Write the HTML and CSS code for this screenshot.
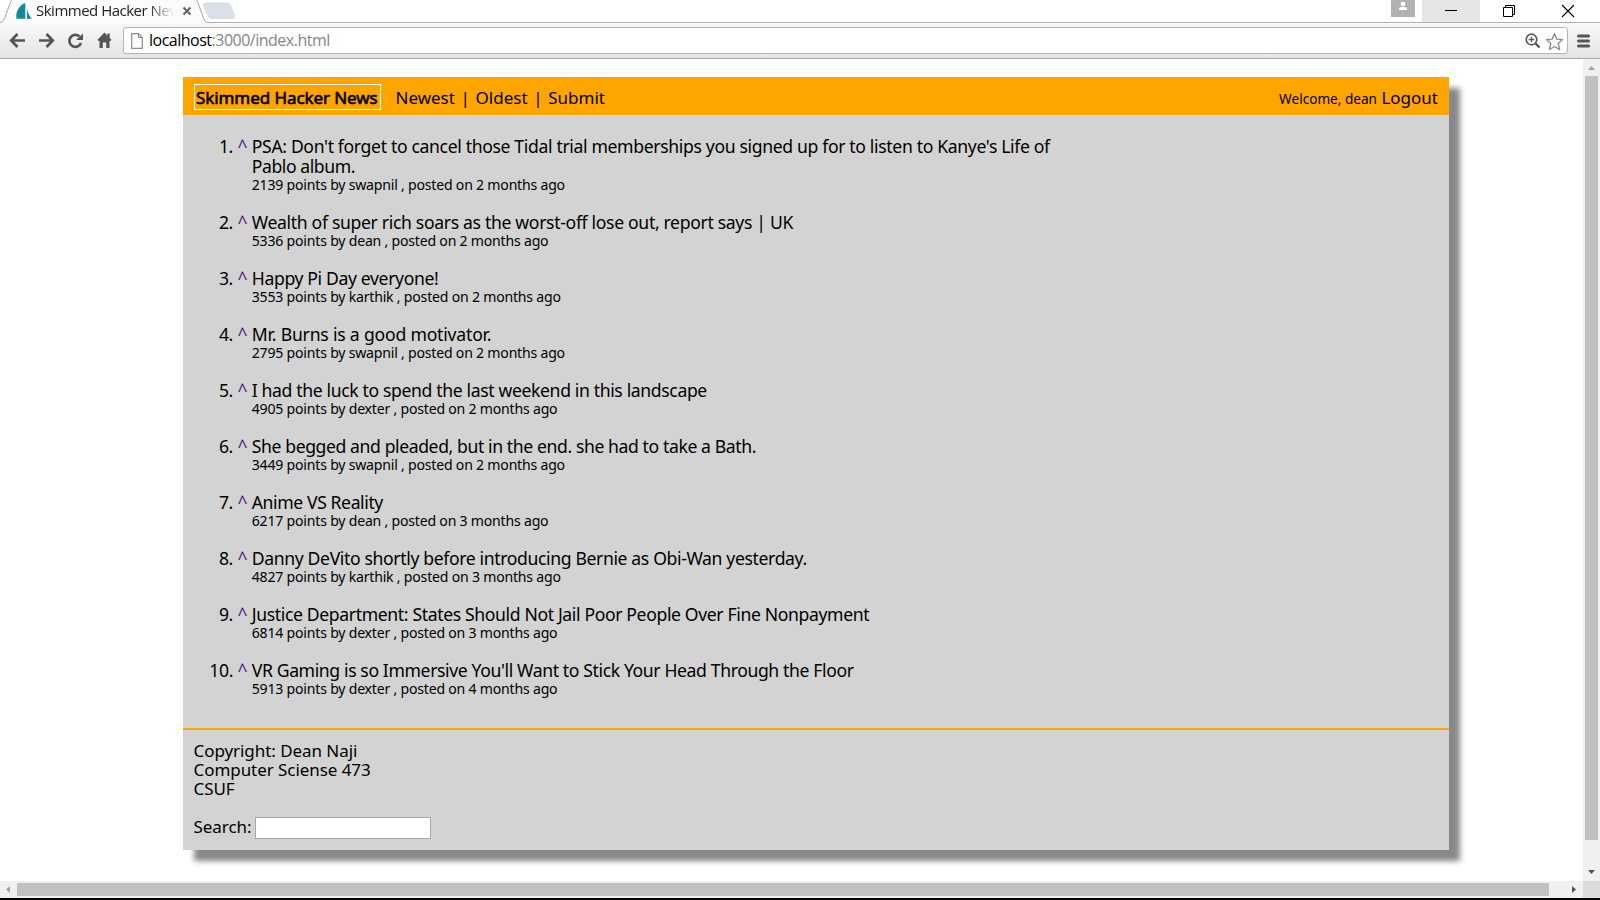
FILE: index.html
```html
<!DOCTYPE html>
<html lang="en">
<head>
<meta charset="utf-8">
<title>Skimmed Hacker News</title>
<link rel="stylesheet" href="styles.css">
</head>
<body>
<div class="tabs">
  <svg class="tab-art" width="250" height="24" viewBox="0 0 250 24">
    <path d="M0 22.5C3 22 4 20 5 17L10.500 2.500C11 1 11.500 0 12.500-1H195C197 0 197 1 198 3L203.500 18C204.500 21 205.500 22.500 208 22.500V24H0Z" fill="#fbfbfb"/>
    <path d="M0 22.500C3 22 4 20 5 17L10.500 2.500C11 1 11.500 0 12.500-1M195-1C197 0 197 1 198 3L203.500 18C204.500 21 205.500 22.500 208 22.500" fill="none" stroke="#a5a5a5"/>
    <path d="M206 3H227Q230 3 231 6L234.500 16Q235 18.500 232.500 18.500H212Q209 18.500 208 16L203.500 5.500Q203 3 206 3Z" fill="#dae0e8" stroke="#ccd2da" stroke-width=".7"/>
    <path d="M25.300 3V18.700H16.500C15.300 12 19 5.500 25.300 3ZM27 8C27.500 12.500 29 16 32 18.700H27Z" fill="#14899b"/>
    <path d="M183.500 7.500L190.500 14.500M190.500 7.500L183.500 14.500" stroke="#606060" stroke-width="1.900"/>
  </svg>
  <span class="tab-title">Skimmed Hacker News</span>
  <div class="window-buttons">
    <svg class="user" width="24" height="17" viewBox="0 0 24 17"><circle cx="12" cy="4" r="2.300" fill="#fff"/><path d="M8 10V8.800Q8 7 10 7H14Q16 7 16 8.800V10Z" fill="#fff"/></svg>
    <svg class="minimize" width="58" height="22" viewBox="0 0 58 22"><path d="M23 10.500H35" stroke="#000"/></svg>
    <svg width="58" height="21" viewBox="0 0 58 21"><path d="M23.500 7.500H32.500V16.500H23.500ZM25.500 7V5.500H34.500V14.500H33" fill="none" stroke="#000"/></svg>
    <svg width="62" height="21" viewBox="0 0 62 21"><path d="M24 5L36 17M36 5L24 17" stroke="#000" stroke-width="1.100"/></svg>
  </div>
</div>
<div class="toolbar">
  <svg class="nav-icons" width="123" height="35" viewBox="0 23 123 35" fill="none" stroke="#555" stroke-width="2.700">
    <path d="M25 40.500H12M17.500 34L11.200 40.500L17.500 47M39 40.500H52M46.500 34L52.800 40.500L46.500 47"/>
    <path d="M79.500 36.500A6 6 0 1 0 81 43"/>
    <path d="M83 33.500V40H76Z" fill="#555" stroke="none"/>
    <path d="M104.500 32.500L97.500 39.800L98.500 41H99.500V48H102.800V42.500H106.200V48H109.500V41H110.500L111.500 39.800L109.700 38V33.500H107.500V35.600Z" fill="#555" stroke="none"/>
  </svg>
  <div class="address">
    <svg width="12" height="16" viewBox="0 0 12 16"><path d="M.7.700H7.500L11.300 4.500V15.300H.7ZM7.500.700V4.500H11.300" fill="#fff" stroke="#8c8c8c" stroke-width="1.200"/></svg>
    <span class="url">localhost<span class="path">:3000/index.html</span></span>
    <svg class="address-tools" width="42" height="24" viewBox="1523 28 42 24" fill="none">
      <circle cx="1531.500" cy="38.500" r="5.300" stroke="#5a5a5a" stroke-width="1.700"/>
      <path d="M1535.500 42.500L1539.500 46.500" stroke="#5a5a5a" stroke-width="2.400"/>
      <path d="M1528.700 38.500H1534.300M1531.500 35.700V41.300" stroke="#5a5a5a" stroke-width="1.300"/>
      <path d="M1554.500 32.500L1556.800 38.200L1562.600 38.600L1558.200 42.500L1559.600 48.500L1554.500 45.500L1549.400 48.500L1550.800 42.500L1546.400 38.600L1552.200 38.200Z" stroke="#8a8a8a" stroke-width="1.300" stroke-linejoin="round"/>
    </svg>
  </div>
  <svg class="menu" width="13" height="14" viewBox="0 0 13 14"><path d="M1.500 2H11.500M1.500 7H11.500M1.500 12H11.500" stroke="#555" stroke-width="3" stroke-linecap="round"/></svg>
</div>
<div class="viewport">
  <div class="page">
    <div class="panel">
      <header class="header">
        <span class="logo">Skimmed Hacker News</span>
        <nav class="nav"><a>Newest</a><i>|</i><a>Oldest</a><i>|</i><a>Submit</a></nav>
        <span class="account"><small>Welcome, dean</small> <a>Logout</a></span>
      </header>
      <ol class="stories">
        <li><b>1.</b><a class="vote">^</a><div><h2>PSA: Don't forget to cancel those Tidal trial memberships you signed up for to listen to Kanye's Life of<br><span class="tail">Pablo album.</span></h2><p>2139 points by swapnil , posted on 2 months ago</p></div></li>
        <li><b>2.</b><a class="vote">^</a><div><h2 class="even">Wealth of super rich soars as the worst-off lose out, report says | UK</h2><p>5336 points by dean , posted on 2 months ago</p></div></li>
        <li><b>3.</b><a class="vote">^</a><div><h2 class="mid">Happy Pi Day everyone!</h2><p>3553 points by karthik , posted on 2 months ago</p></div></li>
        <li><b>4.</b><a class="vote">^</a><div><h2 class="loose">Mr. Burns is a good motivator.</h2><p>2795 points by swapnil , posted on 2 months ago</p></div></li>
        <li><b>5.</b><a class="vote">^</a><div><h2 class="mid">I had the luck to spend the last weekend in this landscape</h2><p>4905 points by dexter , posted on 2 months ago</p></div></li>
        <li><b>6.</b><a class="vote">^</a><div><h2 class="snug">She begged and pleaded, but in the end. she had to take a Bath.</h2><p>3449 points by swapnil , posted on 2 months ago</p></div></li>
        <li><b>7.</b><a class="vote">^</a><div><h2 class="snug">Anime VS Reality</h2><p>6217 points by dean , posted on 3 months ago</p></div></li>
        <li><b>8.</b><a class="vote">^</a><div><h2 class="mid">Danny DeVito shortly before introducing Bernie as Obi-Wan yesterday.</h2><p>4827 points by karthik , posted on 3 months ago</p></div></li>
        <li><b>9.</b><a class="vote">^</a><div><h2 class="mid">Justice Department: States Should Not Jail Poor People Over Fine Nonpayment</h2><p>6814 points by dexter , posted on 3 months ago</p></div></li>
        <li><b>10.</b><a class="vote">^</a><div><h2 class="close">VR Gaming is so Immersive You'll Want to Stick Your Head Through the Floor</h2><p>5913 points by dexter , posted on 4 months ago</p></div></li>
      </ol>
      <footer class="footer">
        <p>Copyright: Dean Naji<br>Computer Sciense 473<br>CSUF</p>
        <label class="search">Search:<input type="text"></label>
      </footer>
    </div>
  </div>
  <div class="vbar">
    <svg width="17" height="17" viewBox="0 0 17 17"><path d="M5 11L8.500 7L12 11Z" fill="#a3a3a3"/></svg>
    <div class="vthumb"></div>
    <svg width="17" height="17" viewBox="0 0 17 17"><path d="M5 6L8.500 10L12 6Z" fill="#505050"/></svg>
  </div>
  <div class="hbar">
    <svg width="17" height="17" viewBox="0 0 17 17"><path d="M10 5L6 8.500L10 12Z" fill="#a3a3a3"/></svg>
    <div class="hthumb"></div>
    <svg width="17" height="17" viewBox="0 0 17 17"><path d="M6 5L10 8.500L6 12Z" fill="#505050"/></svg>
  </div>
  <div class="corner"></div>
</div>
</body>
</html>
```

FILE: styles.css
```css
* { box-sizing: border-box; }
html, body { margin: 0; }
body {
  width: 1600px;
  height: 900px;
  overflow: hidden;
  background: #000;
  color: #000;
  font-family: "Noto Sans", "Open Sans", sans-serif;
}
svg { display: block; flex: none; }
p, h2, ol { margin: 0; padding: 0; }

/* Browser window */
.tabs {
  position: relative;
  display: flex;
  height: 23px;
  background: #fff;
  border-bottom: 1px solid #b0b0b0;
}
.tab-art { position: absolute; left: 0; top: 0; }
.tab-title {
  position: relative;
  width: 138px;
  margin-left: 36px;
  overflow: hidden;
  white-space: nowrap;
  font: 15px/20px "Open Sans", sans-serif;
  letter-spacing: -.5px;
  color: #222;
  -webkit-mask-image: linear-gradient(90deg, #000 112px, transparent 138px);
  mask-image: linear-gradient(90deg, #000 112px, transparent 138px);
}
.window-buttons { display: flex; margin-left: auto; }
.user { background: #b2b2b2; margin-right: 7px; }
.minimize { background: #e5e5e5; }
.toolbar {
  display: flex;
  align-items: center;
  height: 36px;
  background: linear-gradient(#fafafa, #e3e3e3);
  border-bottom: 1px solid #a8a8a8;
}
.address {
  display: flex;
  align-items: center;
  width: 1445px;
  height: 27px;
  padding: 0 2px 0 7px;
  background: #fff;
  border: 1px solid #b4b4b4;
  border-radius: 3px;
}
.url {
  margin: 0 0 2px 6px;
  font: 16px/22px "Open Sans", sans-serif;
  letter-spacing: -.5px;
}
.path { color: #858585; }
.address-tools { margin-left: auto; }
.menu { margin-left: 9px; }

.viewport {
  display: grid;
  grid-template: 822px 17px / 1583px 17px;
  background: #fff;
}
.page { padding: 18px 0 0 183px; }
.vbar { display: flex; flex-direction: column; background: #f0f0f0; }
.vthumb { width: 13px; height: 764px; margin: 0 2px auto; background: #c1c1c1; }
.hbar { display: flex; background: #f0f0f0; }
.hthumb { width: 1532px; height: 13px; margin: 2px auto 2px 0; background: #c1c1c1; }
.corner { background: #dcdcdc; }

/* Site */
.panel {
  width: 1266px;
  height: 773px;
  background: #d3d3d3;
  box-shadow: 11px 11px 5.5px #888;
  font-size: 17px;
  line-height: 19px;
}
.header {
  display: flex;
  align-items: baseline;
  height: 38px;
  padding: 7px 11px 0;
  background: orange;
}
.logo {
  width: 187px;
  height: 26px;
  padding: 3px 0 2px 1px;
  border: 1px solid #fff;
  white-space: nowrap;
  letter-spacing: -.08px;
  -webkit-text-stroke: .6px #000;
}
.nav { display: flex; margin-left: 14.5px; }
.nav i { width: 20.7px; text-align: center; font-style: normal; }
.account { margin-left: auto; }
.account small { font-size: 13.6px; }

.stories {
  display: flex;
  flex-direction: column;
  gap: 19px;
  height: 613px;
  padding-top: 21px;
  list-style: none;
  font-size: 17.6px;
  line-height: 20px;
}
.stories li { display: flex; }
.stories b { width: 50px; text-align: right; font-weight: 400; letter-spacing: -.35px; }
.vote { width: 14.2px; margin-left: 4.6px; color: #551a8b; }
.stories h2 {
  font-size: 17.6px;
  font-weight: 400;
  white-space: nowrap;
  letter-spacing: -.348px;
}
.stories .even { letter-spacing: -.33px; }
.stories .mid { letter-spacing: -.365px; }
.stories .close { letter-spacing: -.382px; }
.stories .snug { letter-spacing: -.4px; }
.stories .loose { letter-spacing: -.2px; }
.tail { letter-spacing: -.43px; }
.stories p { font-size: 14.08px; line-height: 17px; letter-spacing: -.21px; }

.footer {
  height: 122px;
  padding: 11px 11px 11px 10.5px;
  border-top: 2px solid orange;
  letter-spacing: -.06px;
}
.search { display: flex; margin-top: 19px; }
.search input {
  width: 176px;
  height: 22px;
  margin-left: 3.5px;
  padding: 0;
  border: 1px solid #a9a9a9;
  background: #fff;
}
```
